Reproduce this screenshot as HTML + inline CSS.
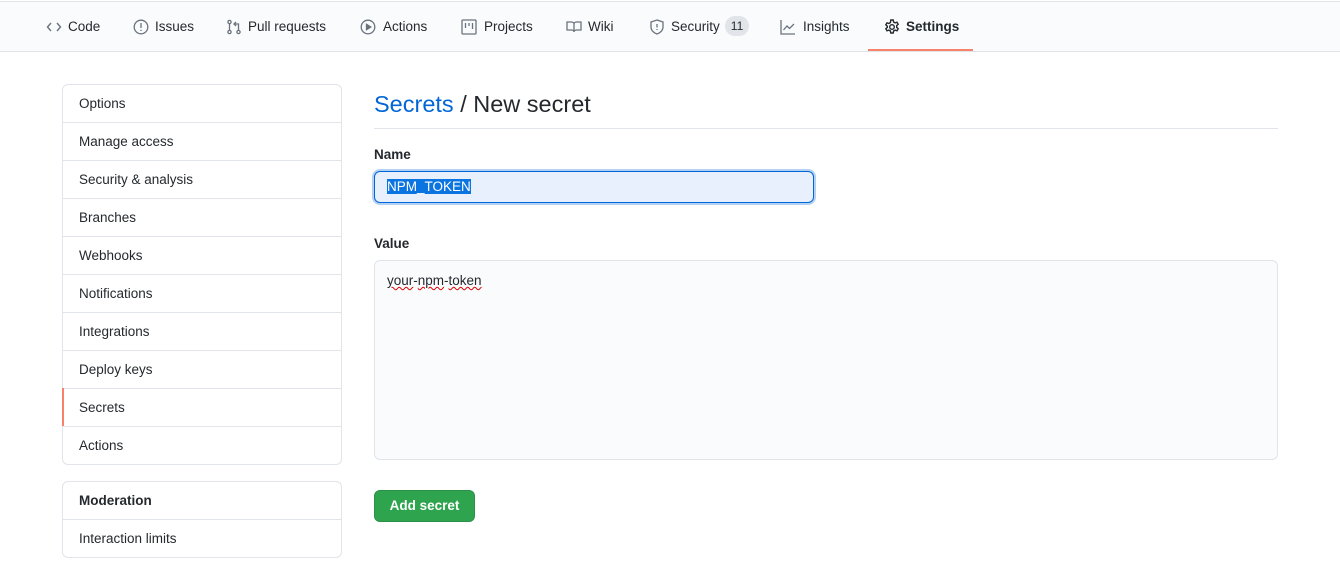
<!DOCTYPE html>
<html><head><meta charset="utf-8"><style>
*{box-sizing:border-box;margin:0;padding:0}
body{width:1340px;height:570px;background:#fff;font-family:"Liberation Sans",sans-serif;font-size:13.5px;color:#24292e;position:relative;overflow:hidden}
.nav{position:absolute;left:0;top:1px;width:1340px;height:51px;background:#fafbfc;border-top:1px solid #e1e4e8;border-bottom:1px solid #e1e4e8}
.ni{position:absolute;top:0;height:49px;line-height:50px;color:#24292e;white-space:nowrap}
.ni svg{position:absolute;top:17px;left:0}
.ni .t{position:absolute;left:22px}
.badge{display:inline-block;background:#e1e4e8;border-radius:10px;padding:0 6px;line-height:20px;font-size:12px;margin-left:5px;vertical-align:middle;position:relative;top:-1px}
.box{position:absolute;left:62px;width:280px;border:1px solid #e1e4e8;border-radius:6px;background:#fff}
.it{height:38px;line-height:37px;padding-left:16px;border-top:1px solid #e1e4e8;position:relative}
.it:first-child{border-top:none;height:37px;line-height:38px}
.sel:before{content:"";position:absolute;left:-1px;top:-1px;bottom:0;width:2px;background:#f9826c}
</style></head><body>
<div class="nav">
<div class="ni" style="left:46px"><svg width="16" height="16" viewBox="0 0 16 16" fill="none" stroke="#6a737d" stroke-width="1.4"><path d="M5 4L1.5 8 5 12M11 4l3.5 4L11 12"/></svg><span class="t">Code</span></div>
<div class="ni" style="left:133px"><svg width="16" height="16" viewBox="0 0 16 16" fill="none" stroke="#6a737d" stroke-width="1.3"><circle cx="8" cy="8" r="6.8"/><path d="M8 4v5M8 10.8v1.2"/></svg><span class="t">Issues</span></div>
<div class="ni" style="left:226px"><svg width="16" height="16" viewBox="0 0 16 16" fill="none" stroke="#6a737d" stroke-width="1.3"><circle cx="3.5" cy="3" r="1.6"/><circle cx="3.5" cy="13" r="1.6"/><circle cx="12.5" cy="13" r="1.6"/><path d="M3.5 4.6v6.8M12.5 11.4V5H8M10 3L8 5l2 2"/></svg><span class="t">Pull requests</span></div>
<div class="ni" style="left:360px"><svg width="16" height="16" viewBox="0 0 16 16" fill="none" stroke="#6a737d" stroke-width="1.3"><circle cx="8" cy="8" r="6.8"/><path d="M6.5 5.3v5.4L10.8 8z" fill="#6a737d"/></svg><span class="t" style="left:23px">Actions</span></div>
<div class="ni" style="left:461px"><svg width="16" height="16" viewBox="0 0 16 16" fill="none" stroke="#6a737d" stroke-width="1.3"><rect x="1" y="1" width="14" height="14" rx="1"/><path d="M4.5 4v5M8 4v3M11.5 4v6"/></svg><span class="t" style="left:23px">Projects</span></div>
<div class="ni" style="left:566px"><svg width="16" height="16" viewBox="0 0 16 16" fill="none" stroke="#6a737d" stroke-width="1.3"><path d="M1 3h4.5C7 3 8 4 8 5v8c0-1-1-2-2.5-2H1zM15 3h-4.5C9 3 8 4 8 5v8c0-1 1-2 2.5-2H15z"/></svg><span class="t">Wiki</span></div>
<div class="ni" style="left:649px"><svg width="16" height="16" viewBox="0 0 16 16" fill="none" stroke="#6a737d" stroke-width="1.3"><path d="M8 1l6 2v5c0 3.5-3 6-6 7-3-1-6-3.5-6-7V3z"/><path d="M8 5v3.5M8 10v1"/></svg><span class="t">Security<span class="badge">11</span></span></div>
<div class="ni" style="left:780px"><svg width="16" height="16" viewBox="0 0 16 16" fill="none" stroke="#6a737d" stroke-width="1.3"><path d="M1 1v14h14M3.5 11l3.5-4 2.5 2.5L14 5"/></svg><span class="t" style="left:23px">Insights</span></div>
<div class="ni" style="left:884px;font-weight:bold"><svg width="16" height="16" viewBox="0 0 16 16" fill="none" stroke="#24292e" stroke-width="1.4"><circle cx="8" cy="8" r="2.3"/><path d="M6.8 1h2.4l.4 2 1.5.9 1.9-.7 1.2 2-1.5 1.4v1.8l1.5 1.4-1.2 2-1.9-.7-1.5.9-.4 2H6.8l-.4-2-1.5-.9-1.9.7-1.2-2 1.5-1.4V7.2L1.8 5.8l1.2-2 1.9.7 1.5-.9z"/></svg><span class="t">Settings</span></div>
<div style="position:absolute;left:868px;top:47px;width:105px;height:2px;background:#f9826c"></div>
</div>

<div class="box" style="top:84px">
<div class="it">Options</div><div class="it">Manage access</div><div class="it">Security &amp; analysis</div><div class="it">Branches</div><div class="it">Webhooks</div><div class="it">Notifications</div><div class="it">Integrations</div><div class="it">Deploy keys</div><div class="it sel">Secrets</div><div class="it">Actions</div>
</div>
<div class="box" style="top:481px">
<div class="it" style="font-weight:bold">Moderation</div><div class="it">Interaction limits</div>
</div>

<div style="position:absolute;left:374px;top:89px;width:904px;height:40px;border-bottom:1px solid #e1e4e8;font-size:23.5px;line-height:30px"><span style="color:#0366d6">Secrets</span> / New secret</div>
<div style="position:absolute;left:374px;top:146px;font-weight:bold;line-height:18px">Name</div>
<div style="position:absolute;left:374px;top:171px;width:440px;height:32px;background:#e8f0fe;border:1px solid #0366d6;border-radius:6px;box-shadow:0 0 0 2px rgba(3,102,214,.3);padding-left:12px;line-height:30px"><span style="background:#0a74e0;color:#fff">NPM_TOKEN</span></div>
<div style="position:absolute;left:374px;top:235px;font-weight:bold;line-height:18px">Value</div>
<div style="position:absolute;left:374px;top:260px;width:904px;height:200px;background:#fafbfc;border:1px solid #e1e4e8;border-radius:6px;padding:10px 12px;line-height:20px"><span style="text-decoration:underline wavy #d00;text-decoration-thickness:1px">your</span>-<span style="text-decoration:underline wavy #d00;text-decoration-thickness:1px">npm</span>-<span style="text-decoration:underline wavy #d00;text-decoration-thickness:1px">token</span></div>
<div style="position:absolute;left:374px;top:490px;width:101px;height:32px;background:#2ea44f;border:1px solid rgba(27,31,35,.15);border-radius:6px;color:#fff;font-weight:bold;text-align:center;line-height:30px">Add secret</div>
</body></html>
